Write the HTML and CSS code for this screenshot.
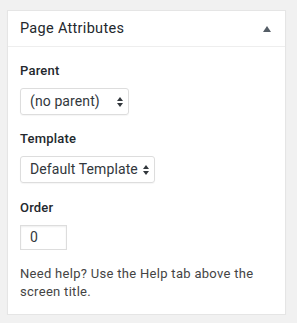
FILE: index.html
```html
<!DOCTYPE html>
<html>
<head>
	<title>Page Attributes</title>
	<link rel="stylesheet" href="styles.css">
</head>
<body>
<div class="postbox">
	<div class="hndle">
		<h2>Page Attributes</h2>
		<span class="toggle"></span>
	</div>
	<div class="inside">
		<p class="label first">Parent</p>
		<div class="select parent">(no parent)<span class="arrows"></span></div>
		<p class="label">Template</p>
		<div class="select template">Default Template<span class="arrows"></span></div>
		<p class="label order-label">Order</p>
		<div class="order">0</div>
		<p class="help">Need help? Use the Help tab above the screen title.</p>
	</div>
</div>
</body>
</html>
```

FILE: styles.css
```css
* {
	padding: 0px;
	margin: 0px;
	box-sizing: border-box;
}
body {
	background: #f1f1f1;
	padding: 10px 11px 0 7px;
	font-family: Roboto, "Noto Sans", sans-serif;
	font-size: 13px;
	color: #23282d;
}
.postbox {
	background: #fff;
	border: 1px solid #e5e5e5;
	box-shadow: 0 1px 1px rgba(0,0,0,.04);
	height: 305px;
}
.hndle {
	display: flex;
	align-items: center;
	justify-content: space-between;
	height: 36px;
	padding: 0 12px;
	border-bottom: 1px solid #eee;
}
.hndle h2 {
	font-size: 14.5px;
	font-weight: 400;
	letter-spacing: 0.3px;
	color: #23282d;
}
.toggle {
	width: 0;
	height: 0;
	border-left: 4px solid transparent;
	border-right: 4px solid transparent;
	border-bottom: 6px solid #555d66;
	margin-right: 2px;
}
.inside {
	padding: 0 12px;
}
.label {
	font-weight: 500;
	margin-top: 15px;
	line-height: 18px;
	letter-spacing: 0.2px;
}
.label.first {
	margin-top: 15px;
}
.label.order-label {
	margin-top: 16px;
}
.select {
	position: relative;
	display: inline-block;
	height: 27px;
	line-height: 25px;
	border: 1px solid #ddd;
	border-radius: 3px;
	margin-top: 8px;
	padding-left: 9px;
	color: #32373c;
	font-size: 14px;
	letter-spacing: 0.1px;
	box-shadow: 0 1px 1px rgba(0,0,0,.04);
}
.parent {
	width: 109px;
}
.template {
	width: 135px;
}
.arrows {
	position: absolute;
	right: 4px;
	top: 8px;
	width: 7px;
	height: 10px;
}
.arrows:before, .arrows:after {
	content: '';
	position: absolute;
	left: 0;
	border-left: 3.5px solid transparent;
	border-right: 3.5px solid transparent;
}
.arrows:before {
	top: 0;
	border-bottom: 4px solid #32373c;
}
.arrows:after {
	bottom: 0;
	border-top: 4px solid #32373c;
}
.order {
	width: 47px;
	height: 25px;
	line-height: 23px;
	border: 1px solid #ddd;
	box-shadow: inset 0 1px 2px rgba(0,0,0,.07);
	margin-top: 8px;
	padding-left: 9px;
	font-size: 14px;
	color: #32373c;
}
.help {
	margin-top: 15px;
	line-height: 18px;
	letter-spacing: 0.3px;
	color: #444;
}
```
